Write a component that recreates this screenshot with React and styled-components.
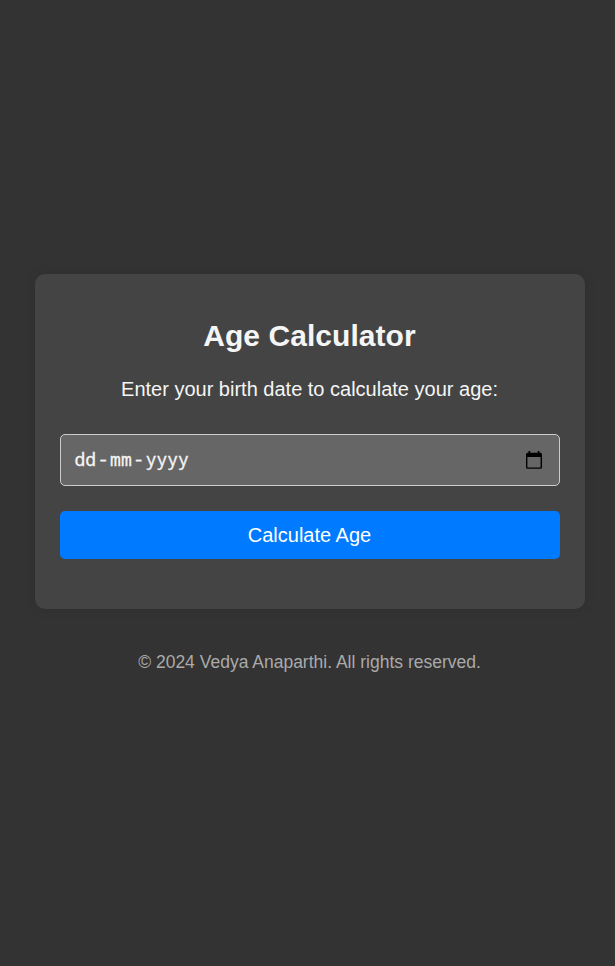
import React from "react";
import styled, { createGlobalStyle } from "styled-components";

const GlobalStyle = createGlobalStyle`
  * { box-sizing: border-box; }
  body {
    margin: 0;
    background: #333;
    color: #f5f5f5;
    font-family: "Liberation Sans", Arial, sans-serif;
  }
`;

const Page = styled.div`
  display: flex;
  flex-direction: column;
  align-items: center;
  min-height: 966px;
  padding: 274px 30px 0 35px;
`;

const Card = styled.main`
  display: flex;
  flex-direction: column;
  width: 550px;
  height: 335px;
  padding: 44px 25px 0;
  border-radius: 10px;
  background: #444;
  box-shadow: 0 0 12px rgba(0, 0, 0, 0.1);
  text-align: center;
`;

const Title = styled.h1`
  margin: 0 0 23px;
  padding-right: 1px;
  font-size: 30px;
  letter-spacing: 0.05px;
  line-height: 36px;
`;

const Prompt = styled.label`
  margin-bottom: 32px;
  padding-right: 1px;
  font-size: 20px;
  line-height: 25px;
`;

const DateField = styled.div`
  display: flex;
  align-items: center;
  justify-content: space-between;
  height: 52px;
  margin-bottom: 25px;
  padding: 0 17px 0 13.5px;
  border: 1px solid #ccc;
  border-radius: 5px;
  background: #666;
`;

const DateSegments = styled.div`
  display: flex;
  gap: 1.6px;
  padding-bottom: 3px;
  font-family: "Noto Sans Mono", "DejaVu Sans Mono", monospace;
  font-size: 18px;
  -webkit-text-stroke: 0.3px currentColor;
`;

const CalendarIcon = styled.svg`
  width: 16px;
  height: 18px;
`;

const SubmitButton = styled.button`
  height: 48px;
  padding: 0 1px 0 0;
  border: 0;
  border-radius: 5px;
  background: #007bff;
  color: #fff;
  font-family: inherit;
  font-size: 20px;
`;

const Footer = styled.footer`
  margin-top: 42px;
  padding-right: 1px;
  color: #aaa;
  font-size: 17.5px;
  line-height: 22px;
`;

export default function App() {
  return (
    <>
      <GlobalStyle />
      <Page>
        <Card>
          <Title>Age Calculator</Title>
          <Prompt>Enter your birth date to calculate your age:</Prompt>
          <DateField>
            <DateSegments>
              <span>dd</span>
              <span>-</span>
              <span>mm</span>
              <span>-</span>
              <span>yyyy</span>
            </DateSegments>
            <CalendarIcon viewBox="0 0 16 18" aria-hidden="true">
              <path fill="#000" fillRule="evenodd" d="M2.5 0h1.7v1.8h7.6V0h1.7v1.8h.9A1.6 1.6 0 0 1 16 3.4v12.8a1.6 1.6 0 0 1-1.6 1.6H1.6A1.6 1.6 0 0 1 0 16.2V3.4a1.6 1.6 0 0 1 1.6-1.6h.9zM1.4 6v10.4h13.2V6z" />
            </CalendarIcon>
          </DateField>
          <SubmitButton>Calculate Age</SubmitButton>
        </Card>
        <Footer>© 2024 Vedya Anaparthi. All rights reserved.</Footer>
      </Page>
    </>
  );
}
